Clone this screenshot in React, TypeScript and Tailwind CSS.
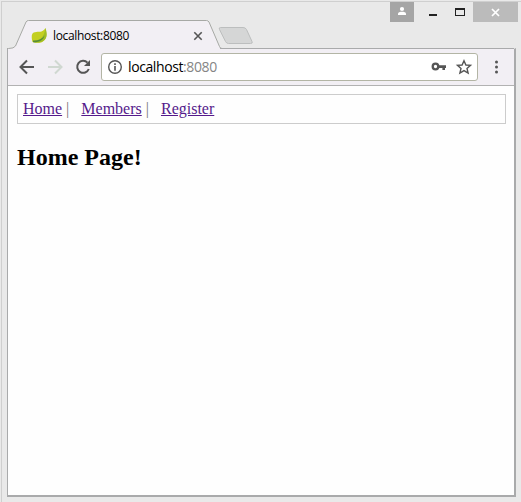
function TitleBar() {
  return (
    <header className="relative flex h-[46px] items-start">
      <svg className="absolute left-[7px] top-[16px]" width="250" height="31" viewBox="0 0 250 31" aria-hidden="true">
        <path d="M0 31.5V30.5H1.5Q7 30.5 8.5 28L19 4Q19.8 2.5 21.5 2.5H199.5Q201 2.5 202 4L212.5 28.5Q213.2 30.5 215 30.5V31.5Z" fill="#f2eff4" stroke="#a7a9a5" />
        <path d="M213.5 9.5H236Q238.5 9.5 239.5 11.5L245 23.5Q246 25.5 243.5 25.5H221.5Q219.5 25.5 218.5 23.5L212.5 11.5Q211.5 9.5 213.5 9.5Z" fill="#d5d6d6" stroke="#bcbebe" />
      </svg>
      <div className="relative flex w-[203px] items-center pl-[31px] pt-[25px]">
        <svg className="shrink-0" width="17" height="18" viewBox="0 0 17 18" aria-hidden="true">
          <path d="M14.5 1C15 4 16.4 9 14 12.5C11 17 5 16 1.5 15C-1 5 3 5 8 4.8C12 4.6 13 3 14.5 1Z" fill="#c3cf21" />
          <path d="M14.5 1C16 6 16.6 10 13.5 13C10.5 16 5.5 15.8 2.5 15.3C8 14 13 11.5 14.5 1Z" fill="#a0bd25" />
          <path d="M2 13.5C7 13.8 11 12 13.5 8.5C12.5 13 8.5 15.5 2 15.3Z" fill="#578d35" />
        </svg>
        <span className="ml-[5px] h-[18px] w-[140px] shrink-0 whitespace-nowrap font-['Open_Sans','Noto_Sans',sans-serif] text-[12px] leading-[18px] tracking-[-0.35px] text-black">localhost:8080</span>
        <svg className="shrink-0" width="10" height="10" viewBox="0 0 10 10" aria-hidden="true">
          <path d="M1.3 1.3L8.7 8.7M8.7 1.3L1.3 8.7" stroke="#555" strokeWidth="1.6" />
        </svg>
      </div>
      <div className="ml-auto flex pr-[3px]">
        <div className="flex h-5 w-6 justify-center bg-[#a5a5a5]">
          <svg width="24" height="20" viewBox="0 0 24 20" aria-hidden="true">
            <circle cx="12" cy="7" r="2.1" fill="#fff" />
            <path d="M8 13V11.8C8 10.4 10 9.8 12 9.8S16 10.4 16 11.8V13Z" fill="#fff" />
          </svg>
        </div>
        <svg width="59" height="20" viewBox="0 0 59 20" aria-hidden="true">
          <path d="M15 12H23V14H15Z" fill="#222" />
          <path d="M41 6H51V14H41ZM42 8V13H50V8Z" fill="#222" fillRule="evenodd" />
        </svg>
        <div className="h-5 w-[45px] bg-[#bbb]">
          <svg width="45" height="20" viewBox="0 0 45 20" aria-hidden="true">
            <path d="M19 7L26 14M26 7L19 14" stroke="#fff" strokeWidth="1.7" />
          </svg>
        </div>
      </div>
    </header>
  );
}

function Toolbar() {
  return (
    <div className="flex h-[37px] shrink-0 items-center border-b border-[#b2b2b2] bg-[#f2eff4]">
      <svg className="shrink-0" width="93" height="36" viewBox="0 0 93 36" fill="none" strokeWidth="2" aria-hidden="true">
        <path d="M26 18H13M19 11.5L12.5 18L19 24.5" stroke="#555" />
        <path d="M40 18H53M47 11.5L53.5 18L47 24.5" stroke="#d0d8d1" />
        <path d="M79.5 13.6A6 6 0 1 0 80.8 20" stroke="#555" />
        <path d="M82 11V17H76Z" fill="#555" />
      </svg>
      <div className="flex h-[28px] w-[377px] shrink-0 items-center rounded-[3px] border border-[#b3b5a5] bg-white pl-[5px]">
        <svg width="16" height="16" viewBox="0 0 16 16" aria-hidden="true">
          <circle cx="8" cy="8" r="6.3" fill="none" stroke="#555" strokeWidth="1.4" />
          <path d="M7.2 4.3H8.8V5.9H7.2ZM7.2 7.1H8.8V11.7H7.2Z" fill="#555" />
        </svg>
        <span className="ml-[5px] flex-1 whitespace-nowrap font-['Open_Sans','Noto_Sans',sans-serif] text-[14px] leading-[20px] tracking-[-0.4px] text-black">localhost<span className="text-[#858585]">:8080</span></span>
        <svg width="17" height="16" viewBox="0 0 17 16" aria-hidden="true">
          <circle cx="4.5" cy="7.5" r="2.8" fill="none" stroke="#555" strokeWidth="2.3" />
          <path d="M7.5 6.3H15V8.9H14V11H11.4V8.9H7.5Z" fill="#555" />
        </svg>
        <svg className="ml-[7px] mr-[4px]" width="18" height="18" viewBox="0 0 18 18" aria-hidden="true">
          <path d="M9 2.8L10.9 7L15.5 7.4L12 10.4L13.1 15L9 12.6L4.9 15L6 10.4L2.5 7.4L7.1 7Z" fill="none" stroke="#555" strokeWidth="1.4" />
        </svg>
      </div>
      <svg className="ml-[14px]" width="10" height="18" viewBox="0 0 10 18" fill="#555" aria-hidden="true">
        <circle cx="4.5" cy="4" r="1.5" />
        <circle cx="4.5" cy="9" r="1.5" />
        <circle cx="4.5" cy="14" r="1.5" />
      </svg>
    </div>
  );
}

function Page() {
  const link = "text-[#551a8b] underline";
  return (
    <main className="flex-1 bg-[#fefefe] pl-[9px] pr-[8px] pt-[8px] font-['Liberation_Serif',serif]">
      <nav className="flex h-[30px] items-center border border-[#ccc] pl-[5px] text-[16px] leading-[18px] text-[#777]">
        <a className={link}>Home</a>
        <span className="ml-1">|</span>
        <a className={`ml-[12px] ${link}`}>Members</a>
        <span className="ml-1">|</span>
        <a className={`ml-[12px] ${link}`}>Register</a>
      </nav>
      <h2 className="mt-[20px] text-[24px] font-bold leading-[27px] text-black">Home Page!</h2>
    </main>
  );
}

export default function App() {
  return (
    <div className="flex h-[502px] w-[521px] flex-col overflow-hidden bg-[#e9e9e9]">
      <div className="ml-px mt-px h-px shrink-0 bg-[#cfcfcf]" />
      <div className="ml-px flex min-h-0 flex-1 flex-col border-l border-[#cfcfcf] pb-[5px]">
        <div className="-ml-[2px]"><TitleBar /></div>
        <div className="relative ml-[5px] flex w-[509px] flex-1 flex-col border border-b-2 border-r-2 border-[#a9aaab] border-t-transparent bg-[#f2eff4] bg-clip-padding">
          <div className="absolute -top-px left-[212px] right-0 h-px bg-[#a9aaab]" />
          <Toolbar />
          <Page />
        </div>
      </div>
    </div>
  );
}
